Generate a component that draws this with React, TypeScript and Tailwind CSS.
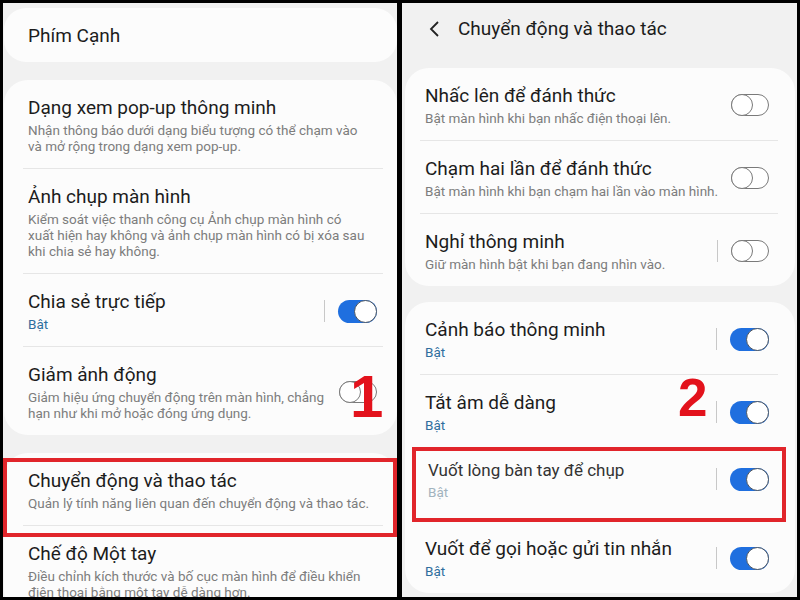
import React from 'react';

type Item = {
    title: string;
    sub?: string[];
    on?: boolean;
    toggle?: boolean;
    bar?: boolean;
    status?: boolean;
    faded?: boolean;
};

function Toggle({ on }: { on: boolean }) {
    if (on) {
        return (
            <div className="relative w-[39px] h-[23px] rounded-full bg-[#1f6fdf]">
                <div className="absolute right-0 top-0 w-[23px] h-[23px] rounded-full bg-white border-[1.5px] border-[#4b5561]" />
            </div>
        );
    }
    return (
        <div className="relative w-[38px] h-[22px] rounded-full bg-white border-[1.5px] border-[#7a7a7a]">
            <div className="absolute left-[-1.5px] top-[-1.5px] w-[22px] h-[22px] rounded-full bg-white border-[1.5px] border-[#7a7a7a]" />
        </div>
    );
}

function Row({ item, pl, pr }: { item: Item; pl: string; pr: string }) {
    // the pasted-in row in the right screen sits a bit higher
    const pad = item.faded ? 'pt-[10px] pb-[20px]' : 'pt-[16px] pb-[14px]';
    return (
        <div className={`flex items-center ${pad} ${pl} ${pr}`}>
            <div className="flex-1">
                <div
                    className={
                        item.faded
                            ? 'text-[17px] leading-[24px] text-[#333] whitespace-nowrap pl-[3px]'
                            : 'text-[19px] leading-[24px] text-[#1c1c1c] whitespace-nowrap'
                    }
                >
                    {item.title}
                </div>
                {item.status && (
                    <div
                        className={
                            item.faded
                                ? 'mt-[2px] text-[13.5px] leading-[16px] text-[#a2b3be] pl-[3px]'
                                : 'mt-[2px] text-[13.5px] leading-[16px] text-[#2f6e9e]'
                        }
                    >
                        Bật
                    </div>
                )}
                {item.sub && (
                    <div className="mt-[2px] text-[13.5px] leading-[16px] text-[#7d7d7d]">
                        {item.sub.map((l, i) => (
                            <div key={i} className="whitespace-nowrap">
                                {l}
                            </div>
                        ))}
                    </div>
                )}
            </div>
            {item.bar && <div className="w-px h-[22px] bg-[#c8c8c8] mr-[13px]" />}
            {item.toggle && <Toggle on={!!item.on} />}
        </div>
    );
}

function Card({ items, className, pl, pr, dl, dr }: { items: Item[]; className: string; pl: string; pr: string; dl: string; dr: string }) {
    return (
        <div className={`bg-[#fcfcfc] rounded-[24px] ${className}`}>
            {items.map((it, i) => (
                <div key={i}>
                    {i > 0 && <div className={`h-px bg-[#e6e6e6] ${dl} ${dr}`} />}
                    <Row item={it} pl={pl} pr={pr} />
                </div>
            ))}
        </div>
    );
}

const leftCard2: Item[] = [
    {
        title: 'Dạng xem pop-up thông minh',
        sub: ['Nhận thông báo dưới dạng biểu tượng có thể chạm vào', 'và mở rộng trong dạng xem pop-up.'],
    },
    {
        title: 'Ảnh chụp màn hình',
        sub: [
            'Kiểm soát việc thanh công cụ Ảnh chụp màn hình có',
            'xuất hiện hay không và ảnh chụp màn hình có bị xóa sau',
            'khi chia sẻ hay không.',
        ],
    },
    { title: 'Chia sẻ trực tiếp', status: true, toggle: true, on: true, bar: true },
    {
        title: 'Giảm ảnh động',
        sub: ['Giảm hiệu ứng chuyển động trên màn hình, chẳng', 'hạn như khi mở hoặc đóng ứng dụng.'],
        toggle: true,
    },
];

const leftCard3: Item[] = [
    { title: 'Chuyển động và thao tác', sub: ['Quản lý tính năng liên quan đến chuyển động và thao tác.'] },
    {
        title: 'Chế độ Một tay',
        sub: ['Điều chỉnh kích thước và bố cục màn hình để điều khiển', 'điện thoại bằng một tay dễ dàng hơn.'],
    },
];

const rightCard1: Item[] = [
    { title: 'Nhấc lên để đánh thức', sub: ['Bật màn hình khi bạn nhấc điện thoại lên.'], toggle: true },
    { title: 'Chạm hai lần để đánh thức', sub: ['Bật màn hình khi bạn chạm hai lần vào màn hình.'], toggle: true },
    { title: 'Nghỉ thông minh', sub: ['Giữ màn hình bật khi bạn đang nhìn vào.'], toggle: true, bar: true },
];

const rightCard2: Item[] = [
    { title: 'Cảnh báo thông minh', status: true, toggle: true, on: true, bar: true },
    { title: 'Tắt âm dễ dàng', status: true, toggle: true, on: true, bar: true },
    { title: 'Vuốt lòng bàn tay để chụp', status: true, toggle: true, on: true, bar: true, faded: true },
    { title: 'Vuốt để gọi hoặc gửi tin nhắn', status: true, toggle: true, on: true, bar: true },
];

export default function App() {
    return (
        <div
            className="w-[800px] h-[600px] bg-black p-[3px] flex gap-[5px] overflow-hidden"
            style={{ fontFamily: 'Roboto, "Noto Sans", sans-serif' }}
        >
            {/* left screen */}
            <div className="relative w-[394px] h-[594px] bg-[#f1f1f1] overflow-hidden pt-[5px] pl-[1px]">
                <div className="bg-[#fcfcfc] rounded-[22px] h-[54px] flex items-center pl-[24px] pt-[3px]">
                    <span className="text-[19px] text-[#1c1c1c]">Phím Cạnh</span>
                </div>
                <Card items={leftCard2} className="mt-[18px]" pl="pl-[24px]" pr="pr-[20px]" dl="ml-[19px]" dr="mr-[14px]" />
                <Card items={leftCard3} className="mt-[18px]" pl="pl-[24px]" pr="pr-[20px]" dl="ml-[19px]" dr="mr-[14px]" />

                <div className="absolute left-[347px] top-[364px] text-[60px] leading-none font-bold text-[#e3121c]" style={{ fontFamily: '"Liberation Sans", Arial, sans-serif' }}>
                    1
                </div>
                <div className="absolute left-0 top-[455px] w-[394px] h-[79px] border-[4px] border-[#e1252b]" />
            </div>

            {/* right screen */}
            <div className="relative flex-1 h-[594px] bg-[#f1f1f1] overflow-hidden pl-[3px] pr-[2px]">
                <div className="h-[65px] flex items-center pb-[13px]">
                    <svg width="14" height="18" viewBox="0 0 14 18" className="ml-[23px]">
                        <polyline points="10,2 3,9 10,16" fill="none" stroke="#222" strokeWidth="1.8" />
                    </svg>
                    <span className="ml-[16px] text-[19px] text-[#1c1c1c]">Chuyển động và thao tác</span>
                </div>
                <Card items={rightCard1} className="" pl="pl-[20px]" pr="pr-[26px]" dl="ml-[15px]" dr="mr-[17px]" />
                <Card items={rightCard2} className="mt-[16px]" pl="pl-[20px]" pr="pr-[26px]" dl="ml-[15px]" dr="mr-[17px]" />

                <div className="absolute left-[276px] top-[368px] text-[53px] leading-none font-bold text-[#e3121c]" style={{ fontFamily: '"Liberation Sans", Arial, sans-serif' }}>
                    2
                </div>
                <div className="absolute left-[10px] top-[444px] w-[374px] h-[75px] border-[4px] border-[#e1252b]" />
            </div>
        </div>
    );
}
